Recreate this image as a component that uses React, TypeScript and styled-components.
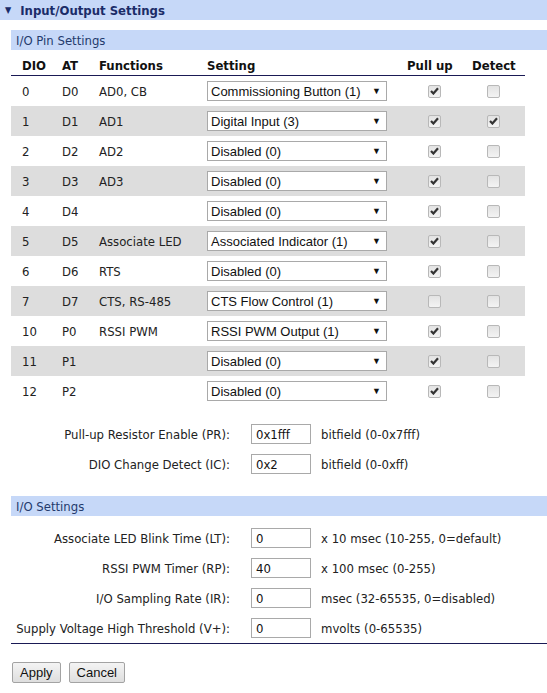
import React from "react";
import styled, { createGlobalStyle } from "styled-components";

const Global = createGlobalStyle`
  html, body { margin: 0; padding: 0; background: #fff; }
  body {
    font-family: "DejaVu Sans Condensed", "DejaVu Sans", Verdana, sans-serif;
    font-size: 13px;
    color: #222;
  }
`;

const Page = styled.div`
  width: 547px;
`;

const TitleBar = styled.div`
  height: 20px;
  background: #c6d8f8;
  display: flex;
  align-items: center;
  gap: 9px;
  padding-left: 5px;
  font-weight: bold;
  color: #1b2c68;
`;

const Arrow = styled.span`
  font-size: 9px;
  line-height: 1;
`;

const Body = styled.div`
  padding: 10px 0 0 11px;
`;

const SectionBar = styled.div<{ $top?: number }>`
  height: 20px;
  margin-top: ${(p) => p.$top ?? 0}px;
  background: #c6d8f8;
  display: flex;
  align-items: center;
  padding-left: 5px;
  color: #243a6c;
`;

const Table = styled.div`
  width: 514px;
  margin-top: 5px;
`;

const GridRow = styled.div<{ $alt?: boolean; $head?: boolean }>`
  display: grid;
  grid-template-columns: 51px 37px 108px 200px 55px 63px;
  align-items: center;
  height: ${(p) => (p.$head ? "20px" : "30px")};
  background: ${(p) => (p.$alt ? "#dddddd" : "transparent")};
  border-bottom: ${(p) => (p.$head ? "1px solid #1a1a55" : "none")};
  font-weight: ${(p) => (p.$head ? "bold" : "normal")};
  color: ${(p) => (p.$head ? "#111" : "#222")};
`;

const Cell = styled.div<{ $pad?: number; $center?: boolean }>`
  padding-left: ${(p) => p.$pad ?? 0}px;
  display: flex;
  justify-content: ${(p) => (p.$center ? "center" : "flex-start")};
  white-space: nowrap;
`;

const Select = styled.div`
  width: 180px;
  height: 20px;
  box-sizing: border-box;
  border: 1px solid #a9a9a9;
  background: #fff;
  display: flex;
  align-items: center;
  justify-content: space-between;
  padding: 0 4px 0 3px;
  font-family: "Liberation Sans", Arial, sans-serif;
  font-size: 13px;
  color: #111;
`;

const SelArrow = styled.span`
  font-size: 9px;
  color: #111;
  margin-right: 1px;
`;

const Box = styled.span`
  width: 13px;
  height: 13px;
  box-sizing: border-box;
  border: 1px solid #b8b8b8;
  border-radius: 2px;
  background: linear-gradient(#e3e3e3, #f3f3f3);
  display: inline-flex;
  align-items: center;
  justify-content: center;
`;

const Check = () => (
  <svg width="9" height="8" viewBox="0 0 9 8">
    <path d="M1 4 L3.4 6.5 L8 1.2" stroke="#333" strokeWidth="2.2" fill="none" />
  </svg>
);

const Fields = styled.div<{ $top?: number }>`
  margin-top: ${(p) => p.$top ?? 0}px;
  display: grid;
  grid-template-columns: 219px 81px auto;
  grid-auto-rows: 30px;
  align-items: center;
`;

const Label = styled.div`
  text-align: right;
  white-space: nowrap;
  color: #222;
`;

const FieldWrap = styled.div`
  display: contents;
`;

const Input = styled.div`
  width: 60px;
  height: 20px;
  box-sizing: border-box;
  border: 1px solid #a9a9a9;
  padding-left: 4px;
  display: flex;
  align-items: center;
  margin-left: 21px;
  color: #111;
`;

const Hint = styled.div`
  padding-left: 10px;
  white-space: nowrap;
  color: #222;
`;

const Separator = styled.div`
  height: 1px;
  background: #1a1a55;
`;

const Buttons = styled.div`
  display: flex;
  gap: 8px;
  margin-top: 18px;
  padding-left: 1px;
`;

const Button = styled.button`
  height: 21px;
  padding: 0 7px;
  border: 1px solid #a3a3a3;
  border-radius: 2px;
  background: linear-gradient(#f4f4f4, #dedede);
  font-family: "Liberation Sans", Arial, sans-serif;
  font-size: 13px;
  color: #111;
`;

type Pin = { dio: string; at: string; fn: string; setting: string; pull: boolean; detect: boolean };

const pins: Pin[] = [
  { dio: "0", at: "D0", fn: "AD0, CB", setting: "Commissioning Button (1)", pull: true, detect: false },
  { dio: "1", at: "D1", fn: "AD1", setting: "Digital Input (3)", pull: true, detect: true },
  { dio: "2", at: "D2", fn: "AD2", setting: "Disabled (0)", pull: true, detect: false },
  { dio: "3", at: "D3", fn: "AD3", setting: "Disabled (0)", pull: true, detect: false },
  { dio: "4", at: "D4", fn: "", setting: "Disabled (0)", pull: true, detect: false },
  { dio: "5", at: "D5", fn: "Associate LED", setting: "Associated Indicator (1)", pull: true, detect: false },
  { dio: "6", at: "D6", fn: "RTS", setting: "Disabled (0)", pull: true, detect: false },
  { dio: "7", at: "D7", fn: "CTS, RS-485", setting: "CTS Flow Control (1)", pull: false, detect: false },
  { dio: "10", at: "P0", fn: "RSSI PWM", setting: "RSSI PWM Output (1)", pull: true, detect: false },
  { dio: "11", at: "P1", fn: "", setting: "Disabled (0)", pull: true, detect: false },
  { dio: "12", at: "P2", fn: "", setting: "Disabled (0)", pull: true, detect: false },
];

const pinFields = [
  { label: "Pull-up Resistor Enable (PR):", value: "0x1fff", hint: "bitfield (0-0x7fff)" },
  { label: "DIO Change Detect (IC):", value: "0x2", hint: "bitfield (0-0xff)" },
];

const ioFields = [
  { label: "Associate LED Blink Time (LT):", value: "0", hint: "x 10 msec (10-255, 0=default)" },
  { label: "RSSI PWM Timer (RP):", value: "40", hint: "x 100 msec (0-255)" },
  { label: "I/O Sampling Rate (IR):", value: "0", hint: "msec (32-65535, 0=disabled)" },
  { label: "Supply Voltage High Threshold (V+):", value: "0", hint: "mvolts (0-65535)" },
];

const FieldList = ({ items, top }: { items: typeof pinFields; top: number }) => (
  <Fields $top={top}>
    {items.map((f) => (
      <FieldWrap key={f.label}>
        <Label>{f.label}</Label>
        <Input>{f.value}</Input>
        <Hint>{f.hint}</Hint>
      </FieldWrap>
    ))}
  </Fields>
);

export default function App() {
  return (
    <Page>
      <Global />
      <TitleBar>
        <Arrow>▼</Arrow>
        <span>Input/Output Settings</span>
      </TitleBar>
      <Body>
        <SectionBar>I/O Pin Settings</SectionBar>
        <Table>
          <GridRow $head>
            <Cell $pad={11}>DIO</Cell>
            <Cell>AT</Cell>
            <Cell>Functions</Cell>
            <Cell>Setting</Cell>
            <Cell>Pull up</Cell>
            <Cell $pad={10}>Detect</Cell>
          </GridRow>
          {pins.map((p, i) => (
            <GridRow key={p.dio} $alt={i % 2 === 1}>
              <Cell $pad={11}>{p.dio}</Cell>
              <Cell>{p.at}</Cell>
              <Cell>{p.fn}</Cell>
              <Cell>
                <Select>
                  <span>{p.setting}</span>
                  <SelArrow>▼</SelArrow>
                </Select>
              </Cell>
              <Cell $center>
                <Box>{p.pull && <Check />}</Box>
              </Cell>
              <Cell $center>
                <Box>{p.detect && <Check />}</Box>
              </Cell>
            </GridRow>
          ))}
        </Table>
        <FieldList items={pinFields} top={13} />
        <SectionBar $top={17}>I/O Settings</SectionBar>
        <FieldList items={ioFields} top={7} />
        <Separator />
        <Buttons>
          <Button>Apply</Button>
          <Button>Cancel</Button>
        </Buttons>
      </Body>
    </Page>
  );
}
